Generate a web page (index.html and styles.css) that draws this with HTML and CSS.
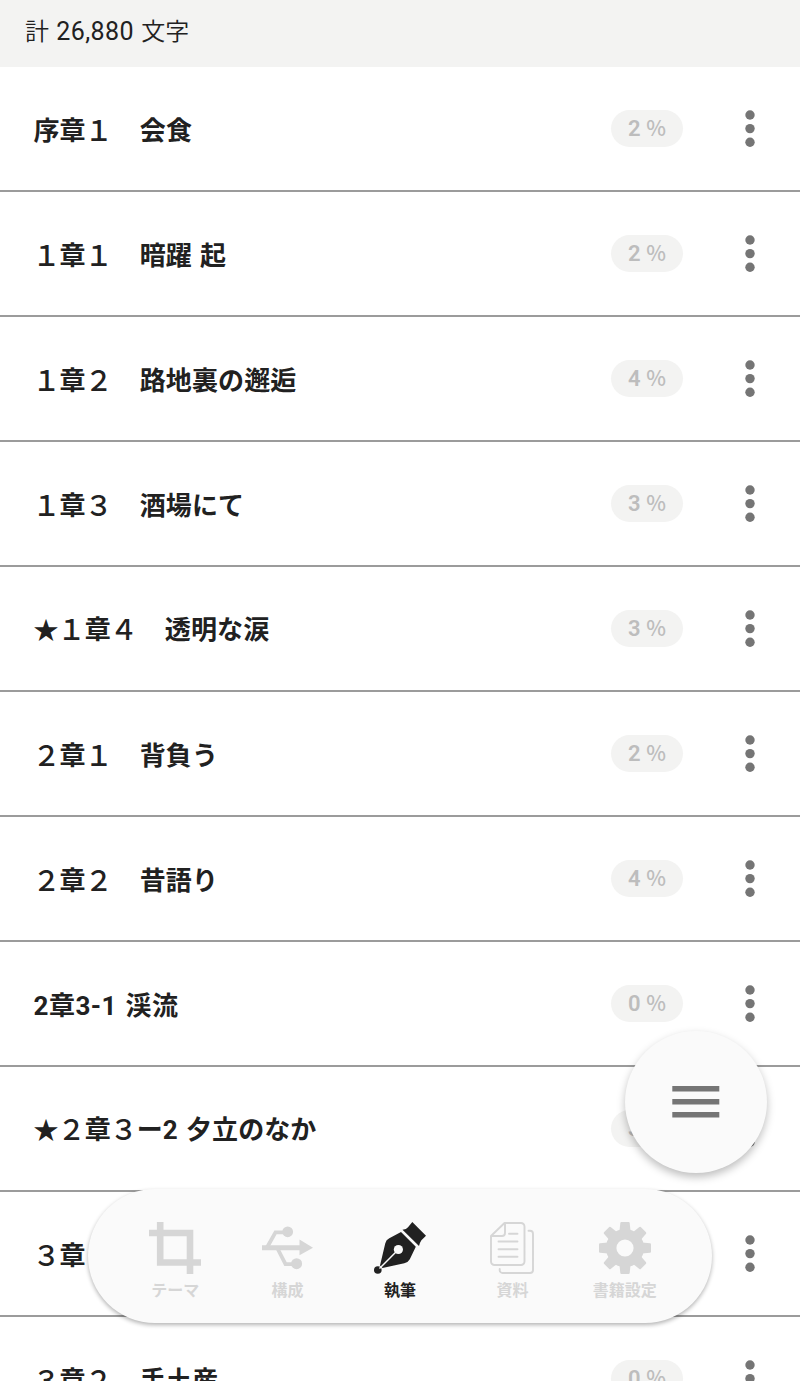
FILE: index.html
```html
<!DOCTYPE html>
<html lang="ja">
<head>
    <meta charset="UTF-8">
    <meta name="viewport" content="width=device-width, initial-scale=1.0">
    <title>執筆</title>
    <link rel="stylesheet" href="styles.css">
</head>
<body>

    <header class="total">計 <span>26,880</span> 文字</header>

    <ul class="chapters">
        <li class="chapter"><span class="title">序章<i class="no">１</i>　会食</span><span class="rate">2 <i>%</i></span><button class="more"><svg id="dots" viewBox="0 0 10 38"><circle cx="5" cy="5" r="4.700"/><circle cx="5" cy="18.600" r="4.700"/><circle cx="5" cy="32.200" r="4.700"/></svg></button></li>
        <li class="chapter"><span class="title"><i>１</i>章<i class="no">１</i>　暗躍 起</span><span class="rate">2 <i>%</i></span><button class="more"><svg><use href="#dots"/></svg></button></li>
        <li class="chapter"><span class="title"><i>１</i>章<i class="no">２</i>　路地裏の邂逅</span><span class="rate">4 <i>%</i></span><button class="more"><svg><use href="#dots"/></svg></button></li>
        <li class="chapter"><span class="title"><i>１</i>章<i class="no">３</i>　酒場にて</span><span class="rate">3 <i>%</i></span><button class="more"><svg><use href="#dots"/></svg></button></li>
        <li class="chapter"><span class="title"><em>★</em><i>１</i>章<i class="no">４</i>　透明な涙</span><span class="rate">3 <i>%</i></span><button class="more"><svg><use href="#dots"/></svg></button></li>
        <li class="chapter"><span class="title"><i>２</i>章<i class="no">１</i>　背負う</span><span class="rate">2 <i>%</i></span><button class="more"><svg><use href="#dots"/></svg></button></li>
        <li class="chapter"><span class="title"><i>２</i>章<i class="no">２</i>　昔語り</span><span class="rate">4 <i>%</i></span><button class="more"><svg><use href="#dots"/></svg></button></li>
        <li class="chapter"><span class="title half">2章3-1 渓流</span><span class="rate">0 <i>%</i></span><button class="more"><svg><use href="#dots"/></svg></button></li>
        <li class="chapter"><span class="title"><em>★</em><i>２</i>章<i>３</i>ー2 夕立のなか</span><span class="rate">3 <i>%</i></span><button class="more"><svg><use href="#dots"/></svg></button></li>
        <li class="chapter"><span class="title"><i>３</i>章</span><button class="more"><svg><use href="#dots"/></svg></button></li>
        <li class="chapter"><span class="title"><i>３</i>章<i class="no">２</i>　手土産</span><span class="rate">0 <i>%</i></span><button class="more"><svg><use href="#dots"/></svg></button></li>
    </ul>

    <button class="fab">
        <svg width="48" height="32" viewBox="0 0 48 32" fill="#757575"><path d="M.3 0h47v5.500h-47zM.3 13h47v5.500h-47zM.3 26h47v5.500h-47z"/></svg>
    </button>

    <nav class="tabs">
        <a class="tab">
            <svg viewBox="0 0 52 52"><path class="line" stroke-width="6.600" d="M0 11h41v41M11.200 0v40.500h40.800"/></svg>
            <span>テーマ</span>
        </a>
        <a class="tab">
            <svg viewBox="0 0 52 52">
                <path d="M0 23.200h37.500v-5.700l13.500 8.200L37.500 33.200v-5H0z"/>
                <path class="line" d="M5 25.500l8.500-15.200h12M15.500 26.500l8 15.700h11" stroke-width="3.800"/>
                <circle cx="25.700" cy="9.800" r="5.400"/><circle cx="34.600" cy="41.700" r="5.500"/>
            </svg>
            <span>構成</span>
        </a>
        <a class="tab active">
            <svg viewBox="0 0 52 52">
                <path d="M38.300 0L52 13.700l-4.600 4.500q-1.400 2-2.400 5.800L28.500 7.700q4-.5 5.500-2.500z"/>
                <path d="M27 10l14.800 14.700-6 12.500q-1.800 3.300-5.500 4L8.500 46 6 43.500l5.300-22.300q.7-3.500 4-4.900z"/>
                <circle cx="3.800" cy="48" r="3.800"/>
                <circle class="cut" cx="24.400" cy="27.500" r="4.600"/>
                <path class="slit" d="M5.500 46.500L24.400 27.500"/>
            </svg>
            <span>執筆</span>
        </a>
        <a class="tab">
            <svg viewBox="0 0 52 52">
                <path class="line" stroke-width="1.900" stroke-linecap="round" stroke-linejoin="round" d="M18.500 1H35a3.500 3.500 0 0 1 3.500 3.500v35a3.500 3.500 0 0 1-3.500 3.500H8.500A3.500 3.500 0 0 1 5 39.500V14zM19 1v10a3 3 0 0 1-3 3H5M42.500 8.800h1.500a3 3 0 0 1 3 3V48a3 3 0 0 1-3 3H16.500a2.800 2.800 0 0 1-2.800-2.800V47M23 11.800h8.500M12.500 19.500h19M12.500 27.200h19M12.500 34.800h19"/>
            </svg>
            <span>資料</span>
        </a>
        <a class="tab">
            <svg viewBox="0 0 52 52">
                <circle class="line" cx="26" cy="26" r="13.800" stroke-width="10.400"/>
                <path id="tooth" d="M20.500 9l.8-8q.2-1 1-1h7.400q.8 0 1 1l.8 8z"/>
                <use href="#tooth" transform="rotate(45 26 26)"/>
                <use href="#tooth" transform="rotate(90 26 26)"/>
                <use href="#tooth" transform="rotate(135 26 26)"/>
                <use href="#tooth" transform="rotate(180 26 26)"/>
                <use href="#tooth" transform="rotate(225 26 26)"/>
                <use href="#tooth" transform="rotate(270 26 26)"/>
                <use href="#tooth" transform="rotate(315 26 26)"/>
            </svg>
            <span>書籍設定</span>
        </a>
    </nav>

</body>
</html>
```
FILE: styles.css
```css
* {
    box-sizing: border-box;
}
body {
    position: relative;
    height: 1381px;
    margin: 0;
    overflow: hidden;
    background: #fff;
    color: #212121;
    font-family: Roboto, "Noto Sans CJK JP", sans-serif;
}
button {
    padding: 0;
    border: 0;
    background: none;
}
.total {
    height: 67px;
    padding-left: 25px;
    background: #f3f3f2;
    font-size: 24px;
    font-weight: 350;
    line-height: 64px;
    word-spacing: 1.5px;
}
.total span {
    font-size: 25px;
    font-weight: 400;
    letter-spacing: 0.4px;
}
.chapters {
    margin: 0;
    padding: 0;
    list-style: none;
}
.chapter {
    display: flex;
    align-items: center;
    height: 125px;
    padding: 0 41px 0 33.500px;
    border-bottom: 2px solid #9b9b9b;
}
.title {
    flex: 1;
    padding-top: 4px;
    font-size: 26px;
    font-weight: 700;
    line-height: 40px;
    letter-spacing: 0.1px;
    word-spacing: 1.5px;
    white-space: nowrap;
}
.title i {
    margin-left: -1px;
    margin-right: 1px;
    font-size: 28px;
    font-style: normal;
    font-weight: 500;
    line-height: 1;
    letter-spacing: -2px;
    vertical-align: -1px;
}
.title .no {
    margin-left: -1px;
    margin-right: 3px;
}
.title em {
    font-size: 25px;
    font-style: normal;
}
.half {
    letter-spacing: 0.5px;
}
.rate {
    width: 72px;
    height: 37px;
    margin-right: 58px;
    border-radius: 19px;
    background: #f3f3f2;
    color: #bdbdbd;
    font-size: 22px;
    font-weight: 600;
    line-height: 38px;
    text-align: center;
}
.rate i {
    font-family: "Noto Sans CJK JP", sans-serif;
    font-size: 21px;
    font-style: normal;
    font-weight: 500;
    line-height: 1;
}
.more {
    width: 18px;
    height: 38px;
}
.more svg {
    display: block;
    width: 10px;
    height: 38px;
    margin: 0 auto;
    fill: #757575;
}
.fab {
    position: absolute;
    top: 1030.500px;
    left: 625px;
    display: flex;
    align-items: center;
    justify-content: center;
    width: 142px;
    height: 142px;
    padding-top: 1px;
    border-radius: 50%;
    background: #fafafa;
    box-shadow: 0 4px 8px rgba(0, 0, 0, 0.26);
}
.tabs {
    position: absolute;
    top: 1189px;
    left: 88px;
    display: flex;
    width: 624px;
    height: 134px;
    padding: 33px 31px 0;
    border-radius: 67px;
    background: #fafafa;
    box-shadow: 0 2px 4px rgba(0, 0, 0, 0.3);
}
.tab {
    flex: 1 0 0;
    display: flex;
    flex-direction: column;
    align-items: center;
    gap: 5px;
    color: #d6d6d6;
    font-size: 16px;
    font-weight: 700;
    line-height: 24px;
    white-space: nowrap;
}
.tab svg {
    width: 52px;
    height: 52px;
    fill: currentColor;
}
.tab .line {
    fill: none;
    stroke: currentColor;
}
.tab .cut {
    fill: #fafafa;
}
.tab .slit {
    stroke: #fafafa;
    stroke-width: 1.500;
}
.active {
    color: #212121;
}
```
